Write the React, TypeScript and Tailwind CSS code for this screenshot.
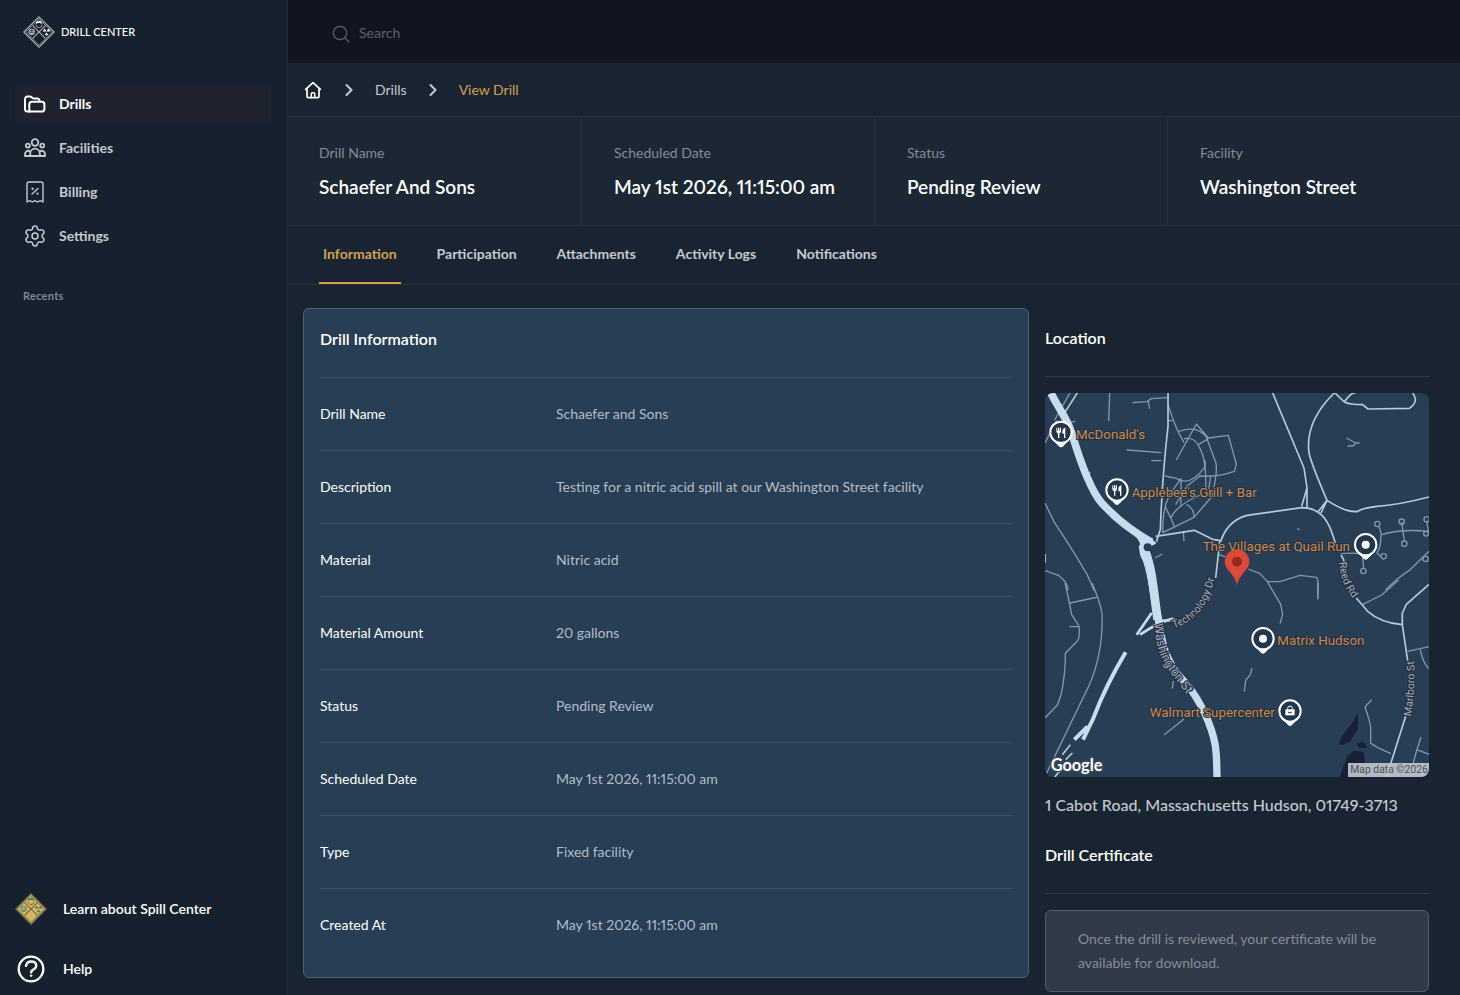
import React from "react";
import { ChevronRight, Settings } from "lucide-react";

type IconProps = { className?: string };

function FolderIcon({ className }: IconProps) {
  return (
    <svg viewBox="0 0 24 24" className={className} fill="none" stroke="currentColor" strokeWidth="2" strokeLinecap="round" strokeLinejoin="round" aria-hidden="true">
      <path d="M7 19.500H4.500a2.500 2.500 0 0 1-2.500-2.500V7a2.500 2.500 0 0 1 2.500-2.500h2.400a2 2 0 0 1 1.200.400l1.400 1.100a2 2 0 0 0 1.200.400h3.300a2.500 2.500 0 0 1 2.500 2.400" />
      <path d="M6.300 19.500v-7.100a2.600 2.600 0 0 1 2.600-2.600h9.900a2.600 2.600 0 0 1 2.600 2.600v4.500a2.600 2.600 0 0 1-2.600 2.600z" />
    </svg>
  );
}

function PeopleIcon({ className }: IconProps) {
  return (
    <svg viewBox="0 0 24 24" className={className} fill="none" stroke="currentColor" strokeWidth="1.800" strokeLinejoin="round" aria-hidden="true">
      <circle cx="12" cy="6.500" r="3.300" />
      <circle cx="4.800" cy="9.600" r="2" />
      <circle cx="19.200" cy="9.600" r="2" />
      <path d="M7.200 20v-2.500a4.800 4.800 0 0 1 9.600 0V20z" />
      <path d="M7 20H2v-2.200a3.200 3.200 0 0 1 5.200-2.300M17 20h5v-2.200a3.200 3.200 0 0 0-5.200-2.300" />
    </svg>
  );
}

function ReceiptIcon({ className }: IconProps) {
  return (
    <svg viewBox="0 0 24 24" className={className} fill="none" stroke="currentColor" strokeWidth="1.400" strokeLinecap="round" strokeLinejoin="round" aria-hidden="true">
      <path d="M4 22V4a2 2 0 0 1 2-2h12a2 2 0 0 1 2 2v18l-2.700-1.400L14.700 22 12 20.600 9.300 22l-2.600-1.400z" />
      <path d="M9 14l6-5.600" />
      <circle cx="9.600" cy="8.800" r=".5" />
      <circle cx="14.500" cy="13.600" r=".5" />
    </svg>
  );
}

function HomeIcon({ className }: IconProps) {
  return (
    <svg viewBox="0 0 20 20" className={className} fill="none" stroke="currentColor" strokeWidth="1.700" strokeLinecap="round" strokeLinejoin="round" aria-hidden="true">
      <path d="M2.600 9.400 10 2.600l7.400 6.800M4 8.400v7.800a1.400 1.400 0 0 0 1.400 1.400h9.200a1.400 1.400 0 0 0 1.400-1.400V8.400" />
      <path d="M8.300 17.400v-3.600a1 1 0 0 1 1-1h1.400a1 1 0 0 1 1 1v3.600" strokeWidth="1.500" />
    </svg>
  );
}

function SearchIcon({ className }: IconProps) {
  return (
    <svg viewBox="0 0 18 18" className={className} fill="none" stroke="currentColor" strokeWidth="1.200" strokeLinecap="round" role="img" aria-label="Search">
      <circle cx="8" cy="8" r="6.700" />
      <path d="m13 13 4 4" />
    </svg>
  );
}

function HelpIcon({ className }: IconProps) {
  return (
    <svg viewBox="0 0 32 32" className={className} fill="none" stroke="currentColor" strokeWidth="2.300" strokeLinecap="round" strokeLinejoin="round" aria-hidden="true">
      <circle cx="16" cy="16" r="12.300" />
      <path d="M11 12.800c.6-2.800 2.500-4.300 5.200-4.300 2.900 0 5 1.600 5 4.200 0 2.200-1.400 3-2.900 3.900-1.400.8-2.200 1.400-2.200 3" strokeWidth="2.400" />
      <circle cx="16" cy="22.700" r=".8" fill="currentColor" strokeWidth="1" />
    </svg>
  );
}

function DiamondIcon({ className, fill, line, mark }: IconProps & { fill: string; line: string; mark: string }) {
  return (
    <svg viewBox="0 0 32 32" className={className} aria-hidden="true">
      <path d="M16 .8 31.200 16 16 31.200.8 16z" fill={fill} stroke={line} strokeWidth="1.200" />
      <path d="M16 2.800 29.200 16 16 29.200 2.800 16z" fill="none" stroke={line} strokeWidth=".8" />
      <path d="M9.600 9.600l12.800 12.800M22.400 9.600 9.600 22.400" stroke={line} strokeWidth="1.200" />
      <path d="M12.800 8.200c0-2 1.300-3.400 3.200-3.400s3.200 1.400 3.200 3.400l-1.800-1.200h-2.800z" fill={mark} />
      <path d="M13 8.600a3 3 0 1 0 6 0" fill="none" stroke={line} strokeWidth=".9" />
      <circle cx="8.700" cy="15.800" r="2.600" fill="none" stroke={mark} strokeOpacity=".75" strokeWidth="1.100" />
      <path d="M7.400 15.400h1M9.400 15.400h1M7.800 17.200h2" stroke={mark} strokeWidth="1" />
      <path d="M20 14.800l1.800-2.400 1.600 3.200h-3.400zM27 14.800l-1.800-2.400-1.600 3.200H27zM21.700 19.200l1.800-2.900 1.800 2.900z" fill={mark} />
    </svg>
  );
}

const navItems = [
  { label: "Drills", icon: FolderIcon, active: true },
  { label: "Facilities", icon: PeopleIcon, active: false },
  { label: "Billing", icon: ReceiptIcon, active: false },
  { label: "Settings", icon: Settings, active: false },
];

const stats = [
  { label: "Drill Name", value: "Schaefer And Sons" },
  { label: "Scheduled Date", value: "May 1st 2026, 11:15:00 am" },
  { label: "Status", value: "Pending Review" },
  { label: "Facility", value: "Washington Street" },
];

const tabs = ["Information", "Participation", "Attachments", "Activity Logs", "Notifications"];

const details = [
  ["Drill Name", "Schaefer and Sons"],
  ["Description", "Testing for a nitric acid spill at our Washington Street facility"],
  ["Material", "Nitric acid"],
  ["Material Amount", "20 gallons"],
  ["Status", "Pending Review"],
  ["Scheduled Date", "May 1st 2026, 11:15:00 am"],
  ["Type", "Fixed facility"],
  ["Created At", "May 1st 2026, 11:15:00 am"],
];

function Sidebar() {
  return (
    <aside className="sticky top-0 flex h-screen w-[287px] shrink-0 flex-col bg-[#16212e] pr-4 pl-[15px]">
      <a href="#home" className="mt-4 flex h-8 items-center gap-1.5 pl-2 text-white">
        <DiamondIcon className="size-8" fill="none" line="#a9adb3" mark="#ffffff" />
        <span className="text-[11px] font-medium">DRILL CENTER</span>
      </a>
      <nav className="mt-9 flex flex-col gap-1">
        {navItems.map(({ label, icon: Icon, active }) => (
          <a
            key={label}
            href={`#${label.toLowerCase()}`}
            className={`flex h-10 items-center gap-3 rounded-md px-2 text-sm font-bold ${active ? "bg-[#1f232f] text-white" : "text-[#c5c9d0]"}`}
          >
            <Icon className="size-6" strokeWidth={1.5} />
            {label}
          </a>
        ))}
      </nav>
      <h2 className="mt-7 pl-2 text-[11px] leading-6 font-bold tracking-wide text-[#7f8792]">Recents</h2>
      <div className="mt-auto flex flex-col gap-7 pb-[10px] text-sm font-semibold text-white">
        <a href="#learn" className="flex h-8 items-center gap-4">
          <DiamondIcon className="size-8" fill="#d5b866" line="#6f6a44" mark="#3f7f63" />
          Learn about Spill Center
        </a>
        <a href="#help" className="flex h-8 items-center gap-4">
          <HelpIcon className="size-8" />
          Help
        </a>
      </div>
    </aside>
  );
}

function Pin({ x, y, children }: { x: number; y: number; children: React.ReactNode }) {
  return (
    <g transform={`translate(${x} ${y})`}>
      <path d="M-24 24-5 43q5 4 10 0L24 24z" fill="#ffffff" />
      <circle r="32" fill="#22364b" stroke="#ffffff" strokeWidth="6" />
      {children}
    </g>
  );
}

function Fork() {
  return (
    <path d="M-14-14v10c0 5 3 7 5 8v13h4V4c2-1 5-3 5-8v-10h-3v9h-2v-9h-4v9h-2v-9zM12-14c-6 2-8 7-8 14v4h5v13h4v-31z" fill="#ffffff" />
  );
}

function LocationMap() {
  return (
    <svg viewBox="0 0 1152 1152" role="img" aria-label="Map of the facility location" className="mt-4 block aspect-square w-full rounded-lg bg-[#283e54]">
      <defs>
        <path id="technology-road" d="M386 706Q436 690 465 655Q502 602 513 530" />
        <path id="washington-road" d="M328 692C334 770 350 802 372 832C390 858 408 880 446 930" />
        <path id="reed-road" d="M882 508C888 560 900 592 940 634" />
        <path id="marlboro-road" d="M1098 970C1105 920 1112 870 1106 780" />
      </defs>
      <path d="M880 1054l12-26 34-44 8-18h5v42l-24 38-20 9zM936 1049l20-2 12 17h-28zM884 1152l22-62 22-17 28 3 8 76z" fill="#182038" />

      <g fill="none" stroke="#8398ae" strokeWidth="4" strokeLinejoin="round">
        <g transform="translate(-15 -15)">
          <path d="M98 0 44 96M15 165l35-68M44 112l62-12M209 15l-3 84M277 44l43-3 14-9 52-3M324 38l5 24M260 186l104 8M334 218h30M384 98h14M15 345l28 58q60 90 98 156l22 50M15 548l40 14q30 22 28 45" />
          <path d="M384 50q20 60 32 84l16 30M416 130q60-20 84 20l28 76q5 30-12 96M409 216l60-108 36 42 60-8 24 86-6 22q-50 18-108 14M432 152q30-5 42 18 20 34 20 68-45 60-85 33l-34-7M495 216l3 90M475 170l30-18M375 355l18 36 12 30M375 355l14-36 34-47M368 434q0-60 10-82M368 434l94-46 60-70M393 388q20-40 95-70M440 350q22 10 22 38M407 350l34-56 42-32M423 271v86M512 262l-8 60M430 430l2 30M144 258l8-6M345 510l22-12M536 500l20 6" />
        </g>
        <g transform="translate(570 -15)">
          <path d="M334 150l28 15-8 9h-16M362 165h12M186 422l8 3M440 440q60-18 140-10M504 430l-4-28M504 430l4 28M438 440q0 40-12 54l12 12M440 440l-8-24M582 490l-60 58q-35 22-70 58M318 497q60-5 86 8M382 500l4 40M575 400l6 35M40 543l35 14 22 24h38l60-19 50 6q8 14 3 66M97 581l40 68 6 30-8 28" />
          <circle cx="427" cy="408" r="8" /><circle cx="500" cy="401" r="8" /><circle cx="508" cy="467" r="8" /><circle cx="446" cy="505" r="8" /><circle cx="385" cy="549" r="8" /><circle cx="575" cy="394" r="8" /><circle cx="573" cy="437" r="7" /><circle cx="572" cy="513" r="8" />
        </g>
        <g transform="translate(-15 570)">
          <path d="M75 0q12 50 20 95l22 34q3 35-4 44L76 211q0 50-6 85-4 40-18 70L15 405M90 60l84-18M88 131h30M156 0q22 50 30 90c2 55 0 130-40 220L20 570M372 456l60-48M400 294l-3 22" />
        </g>
        <g transform="translate(570 570)">
          <path d="M248 0v44M51 255l-5 20-14 17-4 34M382 65l58-29L490-8M410 350l-20 22q14 40 17 60v48q10 10 61 32M518 205l64-14M556 200q8 45 30 60M528 570q10-50 30-108M545 500l38 14M525 560l58 22" />
        </g>
      </g>
      <g fill="none" stroke="#b7c9da" strokeWidth="5" strokeLinejoin="round">
        <path d="M369 0v100q-18 160-23 310l-12 36M100-5 52 70M332 430l116-18 58 28 22 3q20-60 78-76L770 344q60 0 85 60 12 30 22 66M525 440l-13 115M683 0l94 225 9 60-16 55M786 285v60M868 0Q780 85 792 180q8 35 54 142L818 358M846 322l-18 38M846 322q55 36 90 34 20-12 60-16 60-3 156-28M870 0l28 27q20-30 34-27M898 27q15 8 55 8l16 13 124-2q30-20 10-46M888 486l8 14 6 40M934 615l34 40q40 35 104 40l17 115M1072 696v-36l12-26 68-60M1082 970l-60 190" />
        <path d="M0 483v26" />
        <path d="M52 1085l24-30M62 1100l20-20M30 1152q20-35 55-20" />
      </g>
      <g fill="none" stroke="#c9dced" strokeLinejoin="round">
        <path d="M15-5c30 60 48 75 65 125 30 100 60 175 90 210 50 55 100 90 150 118" strokeWidth="23" />
        <path d="M230 382 330 450 298 466 270 420z" fill="#c9dced" strokeWidth="6" />
        <path d="M300 440q-14 30 4 60c20 60 20 100 28 140l12 60c10 70 20 90 50 140 40 40 60 70 85 120 40 90 35 120 37 195" strokeWidth="22" />
        <path d="M292 455c30 60 32 130 46 225" strokeWidth="26" />
        <path d="M320 660l-45 65M285 725q60-40 100-48M335 685l60-5" strokeWidth="8" />
        <path d="M242 778q-60 100-98 200l-30 62M128 1000l-40 40" strokeWidth="12" />
      </g>
      <circle cx="308" cy="463" r="12" fill="#283e54" />

      <g className="font-['Roboto',sans-serif]" fill="#a5aebc" stroke="#26303f" strokeWidth="7" paintOrder="stroke" fontSize="32">
        <text><textPath href="#technology-road">Technology Dr</textPath></text>
        <text fontSize="37"><textPath href="#washington-road">Washington St</textPath></text>
        <text><textPath href="#reed-road">Reed Rd</textPath></text>
        <text><textPath href="#marlboro-road">Marlboro St</textPath></text>
      </g>
      <g className="font-['Roboto',sans-serif]" fill="#c78a55" stroke="#26303f" strokeWidth="6" paintOrder="stroke" fontSize="40">
        <text x="93" y="138">McDonald's</text>
        <text x="260" y="311">Applebee's Grill + Bar</text>
        <text x="473" y="475">The Villages at Quail Run</text>
        <text x="697" y="757">Matrix Hudson</text>
        <text x="314" y="973">Walmart Supercenter</text>
      </g>

      <Pin x={48} y={118}><Fork /></Pin>
      <Pin x={216} y={291}><Fork /></Pin>
      <Pin x={962} y={455}><circle r="12" fill="#ffffff" /></Pin>
      <Pin x={654} y={737}><circle r="12" fill="#ffffff" /></Pin>
      <Pin x={735} y={954}>
        <path d="M-14 13v-18h28v18z" fill="#ffffff" />
        <path d="M-7-4v-4a7 7 0 0 1 14 0v4" fill="none" stroke="#ffffff" strokeWidth="3" />
        <path d="M-6 3q6 6 12 0" fill="none" stroke="#22364b" strokeWidth="3" />
      </Pin>
      <path d="M576 577c-4-32-37-45-37-71a37 37 0 0 1 74 0c0 26-33 39-37 71z" fill="#d94a38" />
      <circle cx="576" cy="506" r="15" fill="#98281f" />

      <text x="17" y="1134" fill="#ffffff" stroke="#3a4657" strokeWidth="9" paintOrder="stroke" fontSize="49" fontWeight="700" className="font-['Lato',sans-serif]">Google</text>
      <rect x="909" y="1110" width="243" height="42" fill="#c3c8cf" fillOpacity=".9" />
      <text x="916" y="1139" fill="#4c5158" fontSize="31" className="font-['Roboto',sans-serif]">Map data ©2026</text>
    </svg>
  );
}

export default function App() {
  return (
    <div className="flex min-h-screen bg-[#182531] font-['Lato','Noto_Sans',sans-serif] proportional-nums">
      <Sidebar />
      <div className="min-w-0 flex-1 border-l border-[#23303c]">
        <header className="flex h-[63px] items-center bg-[#12151f] px-11 pt-1">
          <label htmlFor="search" className="text-[#5b616c]">
            <SearchIcon className="size-[18px]" />
          </label>
          <input id="search" type="search" placeholder="Search" className="ml-2 min-w-0 flex-1 bg-transparent pb-0.5 pl-px text-sm text-white outline-none placeholder:text-[#5b616c]" />
        </header>

        <nav aria-label="Breadcrumb" className="flex h-[54px] items-center border-b border-[#25323e] px-[15px] text-sm text-[#c5c9d0]">
          <a href="#home" aria-label="Home" className="text-white"><HomeIcon className="size-5" /></a>
          <ChevronRight className="mx-4 size-5" strokeWidth={2.5} />
          <a href="#drills">Drills</a>
          <ChevronRight className="mx-4 size-5" strokeWidth={2.5} />
          <a href="#view" aria-current="page" className="text-[#d3a052]">View Drill</a>
        </nav>

        <dl className="grid grid-cols-4 border-b border-[#25323e] bg-[#1b2834]">
          {stats.map(({ label, value }) => (
            <div key={label} className="border-l border-[#25323e] py-6 pr-4 pl-8 first:border-l-0 first:pl-[31px]">
              <dt className="text-sm leading-6 text-[#848b96]">{label}</dt>
              <dd className="mt-2 text-[19px] leading-7 font-semibold text-white">{value}</dd>
            </div>
          ))}
        </dl>

        <div role="tablist" className="flex h-[59px] gap-8 border-b border-[#25323e] px-[31px]">
          {tabs.map((tab, i) => (
            <button
              key={tab}
              type="button"
              role="tab"
              aria-selected={i === 0}
              className={`border-b-2 px-1 text-sm font-bold ${i === 0 ? "border-[#d3a052] text-[#d3a052]" : "border-transparent text-[#c5c9d0]"}`}
            >
              {tab}
            </button>
          ))}
        </div>

        <main className="flex items-start gap-4 pt-[23px] pr-[31px] pl-[15px]">
          <section className="min-w-0 flex-1 rounded-md border border-[#4d6277] bg-[#283e54] p-4">
            <h2 className="pb-6 text-base leading-7 font-semibold text-white">Drill Information</h2>
            <dl>
              {details.map(([label, value]) => (
                <div key={label} className="flex border-t border-[#3d5267] py-6 text-sm leading-6">
                  <dt className="w-[236px] shrink-0 text-white">{label}</dt>
                  <dd className="text-[#b4bcc6]">{value}</dd>
                </div>
              ))}
            </dl>
          </section>

          <aside className="w-96 shrink-0 pt-4">
            <h2 className="border-b border-[#2d3a47] pb-6 text-base leading-7 font-semibold text-white">Location</h2>
            <LocationMap />
            <p className="mt-4 text-base leading-6 font-medium text-[#c5c9d0]">1 Cabot Road, Massachusetts Hudson, 01749-3713</p>
            <h2 className="mt-6 border-b border-[#2d3a47] pb-6 text-base leading-7 font-semibold text-white">Drill Certificate</h2>
            <p className="mt-4 rounded-md border border-[#535e6b] bg-[#303a48] px-8 py-4 text-sm leading-6 text-[#858d99]">
              Once the drill is reviewed, your certificate will be available for download.
            </p>
          </aside>
        </main>
      </div>
    </div>
  );
}
